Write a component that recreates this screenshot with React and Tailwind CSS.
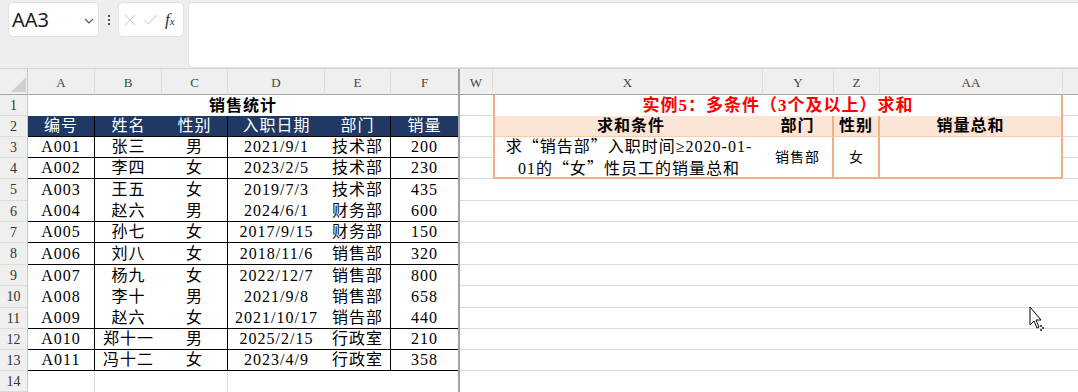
import React from "react";
import clsx from "clsx";

const serif = "font-['Liberation_Serif','Noto_Sans_CJK_SC',serif]";

const rows = [
  ["A001", "张三", "男", "2021/9/1", "技术部", "200"],
  ["A002", "李四", "女", "2023/2/5", "技术部", "230"],
  ["A003", "王五", "女", "2019/7/3", "技术部", "435"],
  ["A004", "赵六", "男", "2024/6/1", "财务部", "600"],
  ["A005", "孙七", "女", "2017/9/15", "财务部", "150"],
  ["A006", "刘八", "女", "2018/11/6", "销售部", "320"],
  ["A007", "杨九", "女", "2022/12/7", "销售部", "800"],
  ["A008", "李十", "男", "2021/9/8", "销售部", "658"],
  ["A009", "赵六", "女", "2021/10/17", "销告部", "440"],
  ["A010", "郑十一", "男", "2025/2/15", "行政室", "210"],
  ["A011", "冯十二", "女", "2023/4/9", "行政室", "358"],
];

// rows (3..13) that get a black line underneath
const blackBottom = [3, 4, 6, 7, 8, 11, 12, 13];

const Q = ({ children }) => (
  <span className="font-['Noto_Sans_CJK_SC',sans-serif]">{children}</span>
);

const RowHead = ({ n }) => (
  <div className="flex items-center justify-center bg-[#efefef] border-r border-b border-r-[#c9c9c9] border-b-[#dcdcdc] text-[14px] text-[#333] font-['Liberation_Serif',serif]">
    {n}
  </div>
);

const ColHead = ({ children, last }) => (
  <div
    className={clsx(
      "flex items-center justify-center bg-[#efefef] border-b border-b-[#a6a6a6] text-[13px] text-[#444] font-['Liberation_Serif',serif] pt-[2px]",
      !last && "border-r border-r-[#dedede]"
    )}
  >
    {children}
  </div>
);

function Toolbar() {
  return (
    <div className="h-[68px] bg-[#eeeeee] flex items-start pt-[2px] pl-2">
      <div className="w-[91px] h-[35px] bg-white rounded-[5px] border border-[#e2e2e2] flex items-center justify-between pl-[3px] pr-[4px]">
        <span className="text-[20px] leading-none text-[#1b1b1b] font-['Noto_Sans',sans-serif]">AA3</span>
        <svg width="10" height="6" viewBox="0 0 10 6" className="mt-[2px]">
          <path d="M1 1l4 4 4-4" fill="none" stroke="#555" strokeWidth="1.2" />
        </svg>
      </div>
      <div className="w-[19px] h-[35px] flex flex-col items-center justify-center gap-[2px]">
        <span className="w-[2px] h-[2px] bg-[#555]" />
        <span className="w-[2px] h-[2px] bg-[#555]" />
        <span className="w-[2px] h-[2px] bg-[#555]" />
      </div>
      <div className="w-[66px] h-[35px] bg-white rounded-[5px] border border-[#e2e2e2] flex items-center pl-[5px] gap-[7px]">
        <svg width="12" height="12" viewBox="0 0 12 12">
          <path d="M1 1l10 10M11 1L1 11" stroke="#c4c4c4" strokeWidth="1" />
        </svg>
        <svg width="15" height="11" viewBox="0 0 15 11">
          <path d="M1 5.5l4.5 4.5L14 1" fill="none" stroke="#c4c4c4" strokeWidth="1" />
        </svg>
        <span className="italic text-[#333] font-['Liberation_Serif',serif] leading-none">
          <span className="text-[17px]">f</span>
          <span className="text-[11px]">x</span>
        </span>
      </div>
      <div className="flex-1 h-[66px] ml-[4px] bg-white rounded-l-[5px] border border-r-0 border-[#e2e2e2]" />
    </div>
  );
}

function LeftPane() {
  const letters = ["A", "B", "C", "D", "E", "F"];
  return (
    <div
      className={clsx(
        "w-[458px] grid grid-cols-[28px_67px_67px_66px_97px_66px_67px] grid-rows-[26px_21px_21px_21px_21px_22px_21px_21px_22px_21px_22px_21px_21px_21px_21px]",
        serif
      )}
    >
      <div className="bg-[#efefef] border-r border-b border-r-[#c9c9c9] border-b-[#a6a6a6] flex items-end justify-end pr-[1px] pb-[2px]">
        <svg width="15" height="15" viewBox="0 0 15 15">
          <path d="M15 0V15H0Z" fill="#d0d0d0" />
        </svg>
      </div>
      {letters.map((l, i) => (
        <ColHead key={l} last={i === 5}>
          {l}
        </ColHead>
      ))}

      <RowHead n={1} />
      <div className="col-span-6 flex items-center justify-center bg-white text-[16px] font-bold tracking-[1px] text-black">
        销售统计
      </div>

      <RowHead n={2} />
      {["编号", "姓名", "性别", "入职日期", "部门", "销量"].map((h, i) => (
        <div
          key={h}
          className={clsx(
            "flex items-center justify-center bg-[#203864] text-white text-[16px] tracking-[1px] border-b border-b-black",
            i % 2 === 0 && i < 5 && "border-r border-r-black"
          )}
        >
          {h}
        </div>
      ))}

      {rows.map((r, ri) => {
        const n = ri + 3;
        return (
          <React.Fragment key={n}>
            <RowHead n={n} />
            {r.map((v, i) => (
              <div
                key={i}
                className={clsx(
                  "flex items-center justify-center bg-white text-black text-[16px] tracking-[1px] whitespace-nowrap",
                  i % 2 === 0 && i < 5 && "border-r border-r-black",
                  blackBottom.includes(n) && "border-b border-b-black"
                )}
              >
                {v}
              </div>
            ))}
          </React.Fragment>
        );
      })}

      <RowHead n={14} />
      <div className="bg-white border-r border-r-[#dadada]" />
      <div className="bg-white" />
      <div className="bg-white border-r border-r-[#dadada]" />
      <div className="bg-white" />
      <div className="bg-white" />
      <div className="bg-white" />
    </div>
  );
}

function RightPane() {
  const grid = "bg-white border-b border-b-[#dadada]";
  const orange = "border-[#f4b084]";
  return (
    <div
      className={clsx(
        "flex-1 grid grid-cols-[33px_270px_71px_46px_183px_1fr] grid-rows-[26px_21px_21px_21px_21px_22px_21px_21px_22px_21px_22px_21px_21px_21px_21px]",
        serif
      )}
    >
      <ColHead>W</ColHead>
      <ColHead>X</ColHead>
      <ColHead>Y</ColHead>
      <ColHead>Z</ColHead>
      <ColHead>AA</ColHead>
      <ColHead last />

      {/* row 1 */}
      <div className={grid} />
      <div
        className={clsx(
          "col-span-4 flex items-center justify-center bg-white border-l-2 border-r-2 text-[17px] font-bold tracking-[1px] text-[#ff0000]",
          orange
        )}
      >
        实例5：多条件（3个及以上）求和
      </div>
      <div className={grid} />

      {/* row 2 */}
      <div className={grid} />
      <div className={clsx("flex items-center justify-center bg-[#fce4d6] border-l-2 border-b border-b-[#f8cbad] text-[16px] font-bold tracking-[1px] text-black pl-[4px]", orange)}>
        求和条件
      </div>
      <div className={clsx("flex items-center justify-center bg-[#fce4d6] border-r-2 border-b border-b-[#f8cbad] text-[16px] font-bold tracking-[1px] text-black", orange)}>
        部门
      </div>
      <div className={clsx("flex items-center justify-center bg-[#fce4d6] border-r-2 border-b border-b-[#f8cbad] text-[16px] font-bold tracking-[1px] text-black", orange)}>
        性别
      </div>
      <div className={clsx("flex items-center justify-center bg-[#fce4d6] border-r-2 border-b border-b-[#f8cbad] text-[16px] font-bold tracking-[1px] text-black", orange)}>
        销量总和
      </div>
      <div className={grid} />

      {/* rows 3-4 merged */}
      <div className={grid} />
      <div className={clsx("row-span-2 flex flex-col items-center justify-center bg-white border-l-2 border-b-2 text-[16px] leading-[21px] tracking-[1px] text-black whitespace-nowrap pb-[1px]", orange)}>
        <span>
          求<Q>“</Q>销告部<Q>”</Q>入职时间≥2020-01-
        </span>
        <span>
          01的<Q>“</Q>女<Q>”</Q>性员工的销量总和
        </span>
      </div>
      <div className={clsx("row-span-2 flex items-center justify-center bg-white border-r-2 border-b-2 text-[14px] tracking-[1px] text-black", orange)}>
        销售部
      </div>
      <div className={clsx("row-span-2 flex items-center justify-center bg-white border-r-2 border-b-2 text-[14px] text-black", orange)}>
        女
      </div>
      <div className={clsx("row-span-2 bg-white border-r-2 border-b-2", orange)} />
      <div className={grid} />
      <div className={grid} />
      <div className={grid} />

      {/* rows 5-14 */}
      {[5, 6, 7, 8, 9, 10, 11, 12, 13].map((n) => (
        <div key={n} className={clsx("col-span-6", grid)} />
      ))}
      <div className="col-span-6 bg-white" />
    </div>
  );
}

function Cursor() {
  return (
    <svg
      width="18"
      height="26"
      viewBox="0 0 18 26"
      className="absolute left-[1029px] top-[306px]"
    >
      <path d="M1 1V19L5 15L8 22L10 21L7 14H12Z" fill="white" stroke="black" strokeWidth="1" strokeLinejoin="miter" />
      <circle cx="12" cy="20" r="0.9" fill="black" />
      <circle cx="14" cy="22" r="0.9" fill="black" />
      <circle cx="12" cy="24" r="0.9" fill="black" />
    </svg>
  );
}

export default function App() {
  return (
    <div className="relative w-[1078px] h-[392px] overflow-hidden bg-white">
      <Toolbar />
      <div className="flex border-t border-t-[#d4d4d4]">
        <LeftPane />
        <div className="w-[2px] bg-[#a3a3a3]" />
        <RightPane />
      </div>
      <Cursor />
    </div>
  );
}
